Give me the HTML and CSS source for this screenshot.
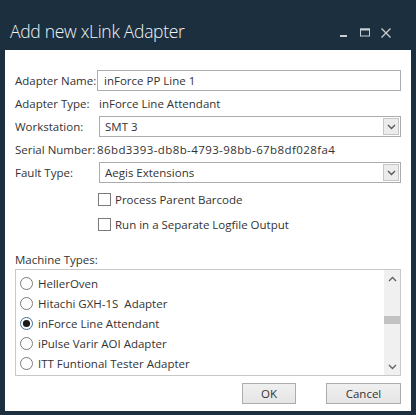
FILE: index.html
```html
<!DOCTYPE html>
<html>
<head>
<meta charset="utf-8">
<link rel="stylesheet" href="styles.css">
</head>
<body>
<div class="window">
  <div class="titlebar">
    <span class="title">Add new xLink Adapter</span>
    <div class="controls">
      <span class="ctl"><svg width="10" height="10" viewBox="0 0 10 10"><rect x="1" y="7" width="7" height="2" fill="#c9ced2"/></svg></span>
      <span class="ctl"><svg width="10" height="10" viewBox="0 0 10 10"><rect x="0.5" y="1" width="9" height="7" fill="none" stroke="#c9ced2" stroke-width="1"/><rect x="0" y="0.5" width="10" height="2" fill="#c9ced2"/></svg></span>
      <span class="ctl"><svg width="10" height="10" viewBox="0 0 10 10"><path d="M0.5 0.5 L9.5 9.5 M9.5 0.5 L0.5 9.5" stroke="#c9ced2" stroke-width="1.3"/></svg></span>
    </div>
  </div>
  <div class="panel">
    <div class="form">
      <div class="lbl">Adapter Name:</div>
      <div class="textbox">inForce PP Line 1</div>
      <div class="lbl">Adapter Type:</div>
      <div class="value val-type">inForce Line Attendant</div>
      <div class="lbl">Workstation:</div>
      <div class="combo"><span class="combo-text">SMT 3</span><span class="drop"><svg width="9" height="6" viewBox="0 0 9 6"><path d="M1 1 L4.5 4.5 L8 1" fill="none" stroke="#555" stroke-width="1.3"/></svg></span></div>
      <div class="lbl">Serial Number:</div>
      <div class="value serial">86bd3393-db8b-4793-98bb-67b8df028fa4</div>
      <div class="lbl">Fault Type:</div>
      <div class="combo"><span class="combo-text">Aegis Extensions</span><span class="drop"><svg width="9" height="6" viewBox="0 0 9 6"><path d="M1 1 L4.5 4.5 L8 1" fill="none" stroke="#555" stroke-width="1.3"/></svg></span></div>
    </div>
    <div class="checks">
      <div class="check"><span class="box"></span><span>Process Parent Barcode</span></div>
      <div class="check"><span class="box"></span><span>Run in a Separate Logfile Output</span></div>
    </div>
    <div class="mt-label">Machine Types:</div>
    <div class="listbox">
      <div class="items">
        <div class="item"><svg class="radio" width="13" height="13" viewBox="0 0 13 13"><circle cx="6.5" cy="6.5" r="6" fill="#fff" stroke="#7a7a7a"/></svg><span>HellerOven</span></div>
        <div class="item"><svg class="radio" width="13" height="13" viewBox="0 0 13 13"><circle cx="6.5" cy="6.5" r="6" fill="#fff" stroke="#7a7a7a"/></svg><span>Hitachi GXH-1S&nbsp; Adapter</span></div>
        <div class="item"><svg class="radio" width="13" height="13" viewBox="0 0 13 13"><circle cx="6.5" cy="6.5" r="6" fill="#fff" stroke="#3d6f9a"/><circle cx="6.5" cy="6.5" r="3.6" fill="#1a1a1a"/></svg><span>inForce Line Attendant</span></div>
        <div class="item"><svg class="radio" width="13" height="13" viewBox="0 0 13 13"><circle cx="6.5" cy="6.5" r="6" fill="#fff" stroke="#7a7a7a"/></svg><span>iPulse Varir AOI Adapter</span></div>
        <div class="item"><svg class="radio" width="13" height="13" viewBox="0 0 13 13"><circle cx="6.5" cy="6.5" r="6" fill="#fff" stroke="#7a7a7a"/></svg><span>ITT Funtional Tester Adapter</span></div>
      </div>
      <div class="scrollbar">
        <span class="arrow"><svg width="9" height="6" viewBox="0 0 9 6"><path d="M1 5 L4.5 1.5 L8 5" fill="none" stroke="#606060" stroke-width="1.3"/></svg></span>
        <div class="track"><div class="thumb"></div></div>
        <span class="arrow"><svg width="9" height="6" viewBox="0 0 9 6"><path d="M1 1 L4.5 4.5 L8 1" fill="none" stroke="#606060" stroke-width="1.3"/></svg></span>
      </div>
    </div>
    <div class="buttons">
      <div class="btn btn-ok">OK</div>
      <div class="btn btn-cancel">Cancel</div>
    </div>
  </div>
</div>
</body>
</html>
```
FILE: styles.css
```css
html, body {
  margin: 0;
  padding: 0;
  background: #1b2f3e;
}
.window {
  width: 416px;
  height: 415px;
  background: #1b2f3e;
  font-family: "Open Sans", "Noto Sans", sans-serif;
  font-size: 11.5px;
  color: #333;
}
.titlebar {
  height: 50px;
  display: flex;
  align-items: flex-start;
  box-sizing: border-box;
  padding: 19px 0 0 10px;
}
.title {
  color: #f2f4f6;
  font-size: 17.5px;
  line-height: 24px;
  font-weight: 300;
  letter-spacing: -0.3px;
}
.controls {
  margin-left: auto;
  margin-right: 20px;
  display: flex;
  padding-top: 9px;
}
.ctl {
  width: 21px;
  height: 10px;
  display: flex;
  justify-content: center;
}
.ctl svg { display: block; }
.panel {
  margin: 0 5px;
  height: 361px;
  background: #fff;
  box-sizing: border-box;
  padding: 20px 10px 0 10px;
}
.form {
  display: grid;
  grid-template-columns: 82px 1fr;
  grid-auto-rows: 21px;
  row-gap: 2px;
}
.lbl {
  line-height: 21px;
  white-space: nowrap;
}
.value {
  line-height: 21px;
  white-space: nowrap;
}
.val-type { padding-left: 2px; }
.serial { letter-spacing: 0.4px; }
.textbox {
  border: 1px solid #abadb3;
  box-sizing: border-box;
  padding-left: 6px;
  line-height: 19px;
}
.combo {
  margin-left: 2px;
  border: 1px solid #acacac;
  box-sizing: border-box;
  display: flex;
  align-items: center;
  padding-left: 5px;
}
.combo-text { flex: 1; line-height: 19px; }
.drop {
  width: 16px;
  height: 17px;
  box-sizing: border-box;
  margin-right: 1px;
  background: #ececec;
  border: 1px solid #c6c6c6;
  display: flex;
  align-items: center;
  justify-content: center;
}
.drop svg { display: block; }
.checks {
  margin-top: 10px;
  margin-left: 83px;
  display: flex;
  flex-direction: column;
  gap: 12px;
}
.check {
  display: flex;
  align-items: center;
  gap: 4px;
  height: 13px;
  white-space: nowrap;
}
.box {
  width: 13px;
  height: 13px;
  box-sizing: border-box;
  border: 1px solid #7a7a7a;
  background: #fff;
}
.mt-label {
  margin-top: 21px;
  line-height: 16px;
}
.listbox {
  margin-top: 1px;
  height: 107px;
  border: 1px solid #c8c8c8;
  box-sizing: border-box;
  display: flex;
}
.items {
  flex: 1;
  padding: 3px 0 0 4px;
}
.item {
  height: 20px;
  display: flex;
  align-items: center;
  gap: 5px;
  white-space: nowrap;
}
.radio { display: block; }
.scrollbar {
  width: 16px;
  background: #f0f0f0;
  display: flex;
  flex-direction: column;
}
.arrow {
  height: 17px;
  display: flex;
  align-items: center;
  justify-content: center;
}
.arrow svg { display: block; }
.track {
  flex: 1;
  padding-top: 29px;
}
.thumb {
  height: 8px;
  background: #c2c2c2;
}
.buttons {
  margin-top: 7px;
  display: flex;
  justify-content: flex-end;
  gap: 30px;
}
.btn {
  height: 21px;
  box-sizing: border-box;
  border: 1px solid #acacac;
  background: linear-gradient(#f0f0f0, #e5e5e5);
  text-align: center;
  line-height: 19px;
}
.btn-ok { width: 54px; }
.btn-cancel { width: 75px; }
```
